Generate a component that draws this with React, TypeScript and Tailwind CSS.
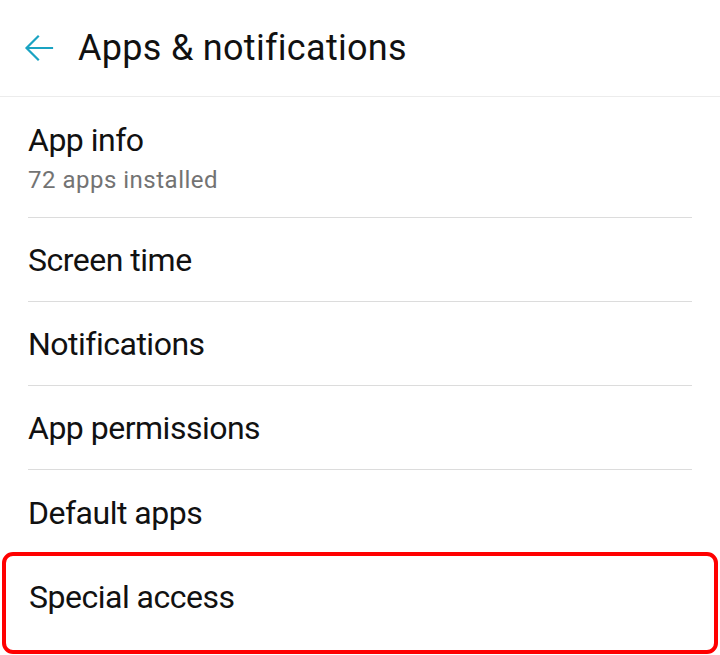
import { useState } from 'react'

const items = ['Screen time', 'Notifications', 'App permissions', 'Default apps']

function BackArrow() {
  return (
    <svg width="30" height="30" viewBox="0 0 30 30" fill="none">
      <path
        d="M28 15H3M14 3.5L2.5 15L14 26.5"
        stroke="#1aa3c2"
        strokeWidth="2.2"
        strokeLinecap="square"
      />
    </svg>
  )
}

export default function App() {
  const [selected] = useState('Special access')

  return (
    <div
      className="h-[655px] w-[720px] overflow-hidden bg-white text-[#111]"
      style={{ fontFamily: 'Roboto, "Noto Sans", sans-serif' }}
    >
      <header className="flex h-[97px] items-center border-b border-[#ececec] pl-[24px]">
        <BackArrow />
        <h1 className="ml-[24px] text-[36px] leading-none tracking-[0.3px]">Apps &amp; notifications</h1>
      </header>

      <div className="mx-[28px] flex h-[121px] flex-col justify-center border-b border-[#dcdcdc] pt-[6px]">
        <div className="text-[32px] leading-[40px] tracking-[-0.5px]">App info</div>
        <div className="text-[24px] leading-[40px] tracking-[0.5px] text-[#737373]">72 apps installed</div>
      </div>

      {items.map((label, i) => (
        <div
          key={label}
          className={
            i < items.length - 1
              ? 'mx-[28px] flex h-[84px] items-center border-b border-[#dcdcdc] pt-[1px] text-[32px] tracking-[-0.5px]'
              : 'mx-[28px] flex h-[84px] items-center pt-[1px] text-[32px] tracking-[-0.5px]'
          }
        >
          {label}
        </div>
      ))}

      <div className="mx-[2px] -mt-[2px] flex h-[102px] items-center rounded-[11px] border-4 border-[#ff0000] pb-[12px] pl-[23px] text-[32px] tracking-[-0.5px]">
        {selected}
      </div>
    </div>
  )
}
